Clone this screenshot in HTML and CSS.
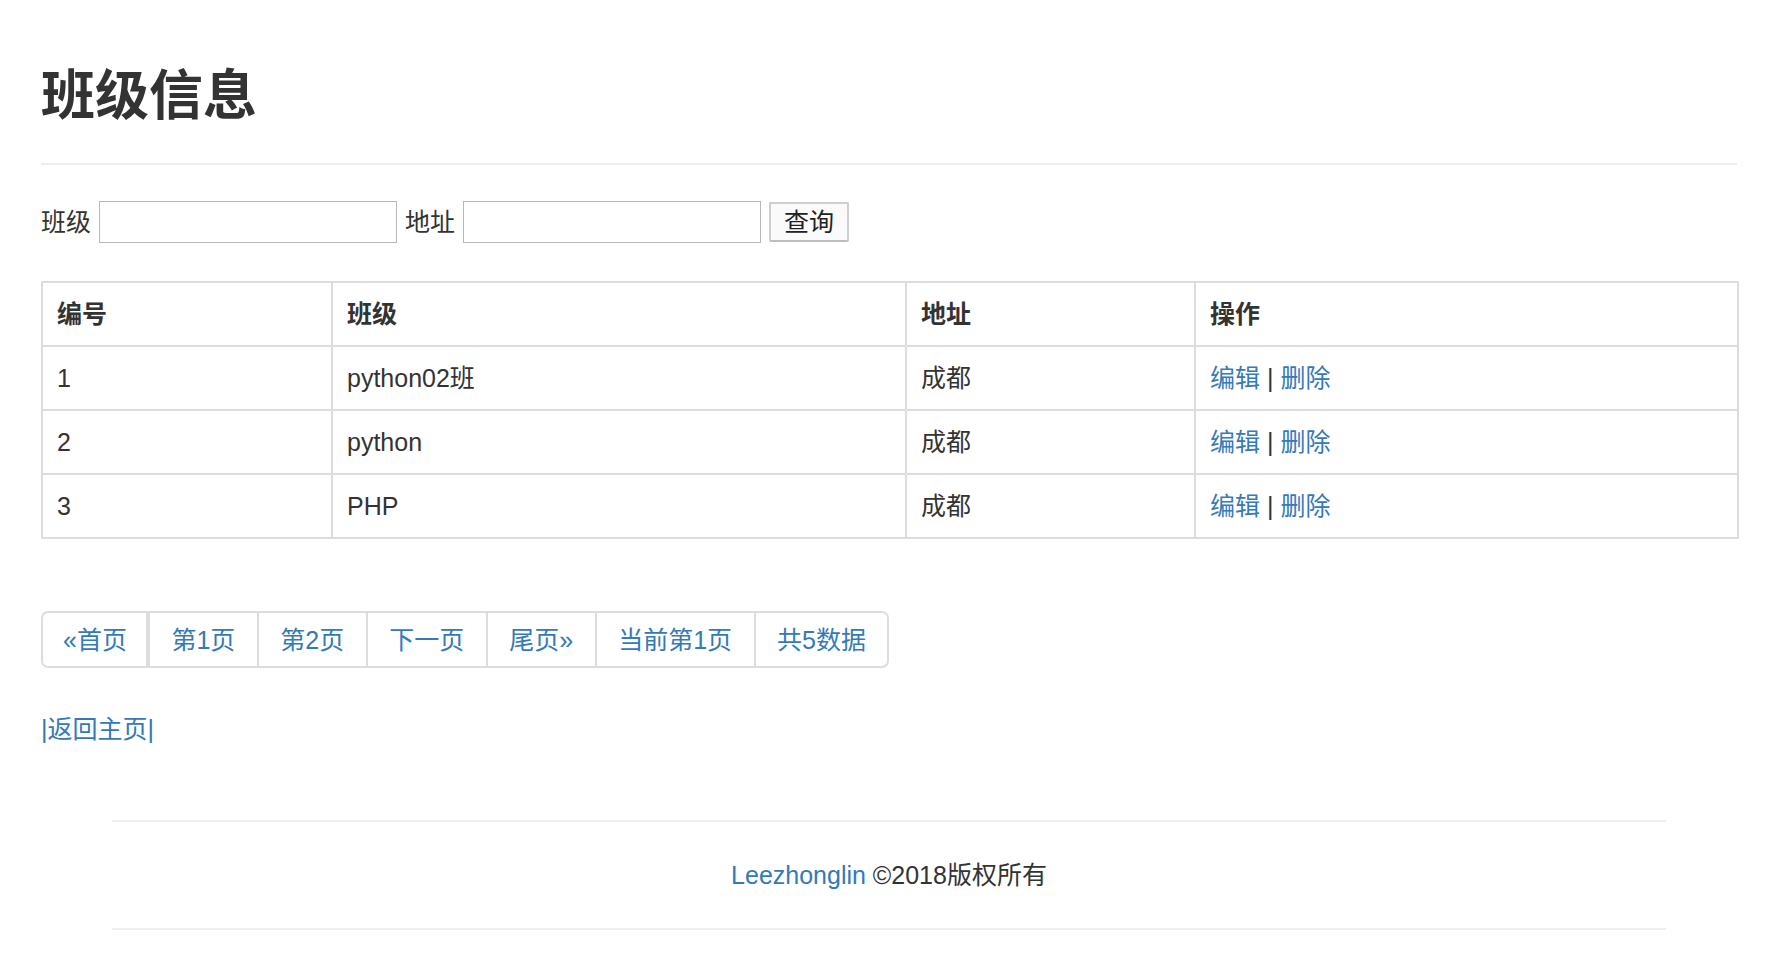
FILE: index.html
```html
<!DOCTYPE html>
<html lang="zh-CN">
<head>
<meta charset="utf-8">
<title>班级信息</title>
<link rel="stylesheet" href="styles.css">
</head>
<body>
<div class="container">
  <div class="page-header"><h1>班级信息</h1></div>
  <form class="search">
    <label class="search-label">班级</label>
    <input class="field" type="text">
    <label class="search-label">地址</label>
    <input class="field" type="text">
    <button class="btn" type="button">查询</button>
  </form>
  <table class="grid">
    <colgroup>
      <col class="c-id"><col class="c-name"><col class="c-addr"><col class="c-op">
    </colgroup>
    <thead>
      <tr><th>编号</th><th>班级</th><th>地址</th><th>操作</th></tr>
    </thead>
    <tbody>
      <tr><td>1</td><td>python02班</td><td>成都</td><td><a href="#">编辑</a> | <a href="#">删除</a></td></tr>
      <tr><td>2</td><td>python</td><td>成都</td><td><a href="#">编辑</a> | <a href="#">删除</a></td></tr>
      <tr><td>3</td><td>PHP</td><td>成都</td><td><a href="#">编辑</a> | <a href="#">删除</a></td></tr>
    </tbody>
  </table>
  <ul class="pagination">
    <li class="first"><a href="#">«首页</a></li>
    <li><a href="#">第1页</a></li>
    <li><a href="#">第2页</a></li>
    <li><a href="#">下一页</a></li>
    <li><a href="#">尾页»</a></li>
    <li><a href="#">当前第1页</a></li>
    <li class="last"><a href="#">共5数据</a></li>
  </ul>
  <p class="back"><a href="#">|返回主页|</a></p>
</div>
<footer class="footer">
  <p><a href="#">Leezhonglin</a> ©2018版权所有</p>
</footer>
</body>
</html>
```
FILE: styles.css
```css
* { box-sizing: border-box; }
html, body { margin: 0; padding: 0; background: #fff; }
body {
  font-family: "Liberation Sans", "Noto Sans CJK SC", sans-serif;
  font-size: 25px;
  line-height: 34px;
  color: #333;
}
a { color: #337ab7; text-decoration: none; }

.container {
  margin-left: 41px;
  width: 1696px;
}

.page-header {
  margin-top: 65px;
  padding-bottom: 36px;
  border-bottom: 2px solid #eee;
}
.page-header h1 {
  margin: 0;
  font-size: 54px;
  line-height: 62px;
  font-weight: 700;
  color: #333;
}

.search {
  margin: 36px 0 0;
  display: flex;
  align-items: center;
  height: 42px;
}
.search-label {
  margin-right: 8px;
}
.field {
  width: 298px;
  height: 42px;
  border: 1px solid #b8b8b8;
  margin: 0 8px 0 0;
  padding: 0 6px;
  font: inherit;
  background: #fff;
}
.btn {
  width: 80px;
  height: 40px;
  border: 2px solid #cfcfcf;
  border-bottom-color: #bdbdbd;
  border-radius: 2px;
  background: #fafafa;
  font: inherit;
  line-height: 34px;
  color: #222;
  padding: 0;
}

.grid {
  margin-top: 38px;
  width: 1696px;
  border-collapse: collapse;
  table-layout: fixed;
  border: 2px solid #ddd;
}
.c-id { width: 290px; }
.c-name { width: 574px; }
.c-addr { width: 289px; }
.c-op { width: 543px; }
.grid th, .grid td {
  border: 2px solid #ddd;
  padding: 14px 14px;
  line-height: 34px;
  text-align: left;
  vertical-align: top;
}
.grid th { font-weight: 700; }

.pagination {
  list-style: none;
  margin: 72px 0 0;
  padding: 0;
  display: flex;
}
.pagination li a {
  display: block;
  padding: 10px 21.5px 9px;
  line-height: 34px;
  border: 2px solid #ddd;
  margin-left: -2px;
  background: #fff;
  color: #337ab7;
}
.pagination li.first a {
  margin-left: 0;
  border-radius: 7px 0 0 7px;
  border-right-width: 4px;
  padding-left: 20px;
  padding-right: 19px;
}
.pagination li.last a {
  border-radius: 0 7px 7px 0;
}

.back {
  margin: 44px 0 0;
  line-height: 34px;
}

.footer {
  margin: 74px 0 0 112px;
  width: 1554px;
  border-top: 2px solid #eee;
  border-bottom: 2px solid #eee;
  padding: 36px 0;
  text-align: center;
}
.footer p {
  margin: 0;
  font-size: 25px;
  line-height: 34px;
  color: #333;
}
```
